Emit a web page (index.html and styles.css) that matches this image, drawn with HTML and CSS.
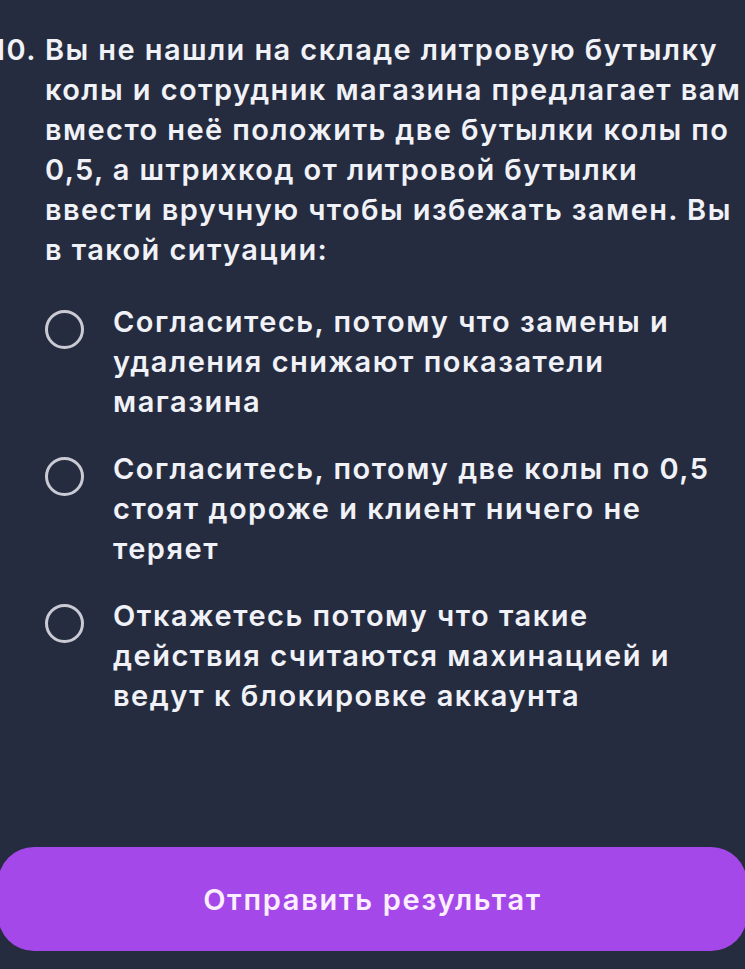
FILE: index.html
```html
<!DOCTYPE html>
<html lang="ru">
<head>
<meta charset="utf-8">
<link rel="stylesheet" href="styles.css">
</head>
<body>
<div class="page">
  <div class="question">
    <span class="num">10.</span>
    <p class="qtext">Вы не нашли на складе литровую бутылку колы и сотрудник магазина предлагает вам вместо неё положить две бутылки колы по 0,5, а штрихкод от литровой бутылки ввести вручную чтобы избежать замен. Вы в такой ситуации:</p>
  </div>
  <div class="options">
    <label class="option"><span class="radio"></span><span class="otext">Согласитесь, потому что замены и удаления снижают показатели магазина</span></label>
    <label class="option"><span class="radio"></span><span class="otext">Согласитесь, потому две колы по 0,5 стоят дороже и клиент ничего не теряет</span></label>
    <label class="option"><span class="radio"></span><span class="otext">Откажетесь потому что такие действия считаются махинацией и ведут к блокировке аккаунта</span></label>
  </div>
  <div class="footer">
    <button class="submit">Отправить результат</button>
  </div>
</div>
</body>
</html>
```
FILE: styles.css
```css
html, body {
  margin: 0;
  padding: 0;
  background: #262c3f;
}
body {
  width: 745px;
  height: 969px;
  overflow: hidden;
  font-family: Inter, "Noto Sans", sans-serif;
  color: #f0f2f8;
}
.page {
  display: flex;
  flex-direction: column;
  height: 969px;
}
.question {
  display: flex;
  padding-top: 30px;
  margin-left: -24px;
}
.num {
  width: 69px;
  flex: none;
  display: flex;
  justify-content: flex-end;
  padding-right: 8px;
  box-sizing: border-box;
  font-size: 29px;
  font-weight: 600;
  line-height: 40px;
  letter-spacing: 1.5px;
  white-space: nowrap;
}
.qtext {
  margin: 0;
  font-size: 29px;
  font-weight: 600;
  line-height: 40px;
  letter-spacing: 1.4px;
  width: 706px;
  flex: none;
}
.options {
  display: flex;
  flex-direction: column;
  gap: 27px;
  margin-top: 32px;
}
.option {
  display: flex;
  align-items: flex-start;
}
.radio {
  flex: none;
  width: 33px;
  height: 33px;
  border: 3px solid #c9cad3;
  border-radius: 50%;
  margin-left: 45px;
  margin-top: 8px;
  margin-right: 29px;
}
.otext {
  font-size: 29px;
  font-weight: 600;
  line-height: 40px;
  letter-spacing: 1.5px;
  width: 632px;
}
.footer {
  margin-top: auto;
  padding-bottom: 18px;
  display: flex;
  justify-content: center;
}
.submit {
  width: 749px;
  margin: 0 -2px;
  flex: none;
  height: 104px;
  border: none;
  border-radius: 36px;
  background: #a548e9;
  color: #fbeeff;
  font-family: Inter, "Noto Sans", sans-serif;
  font-size: 29px;
  font-weight: 600;
  letter-spacing: 1.7px;
}
```
